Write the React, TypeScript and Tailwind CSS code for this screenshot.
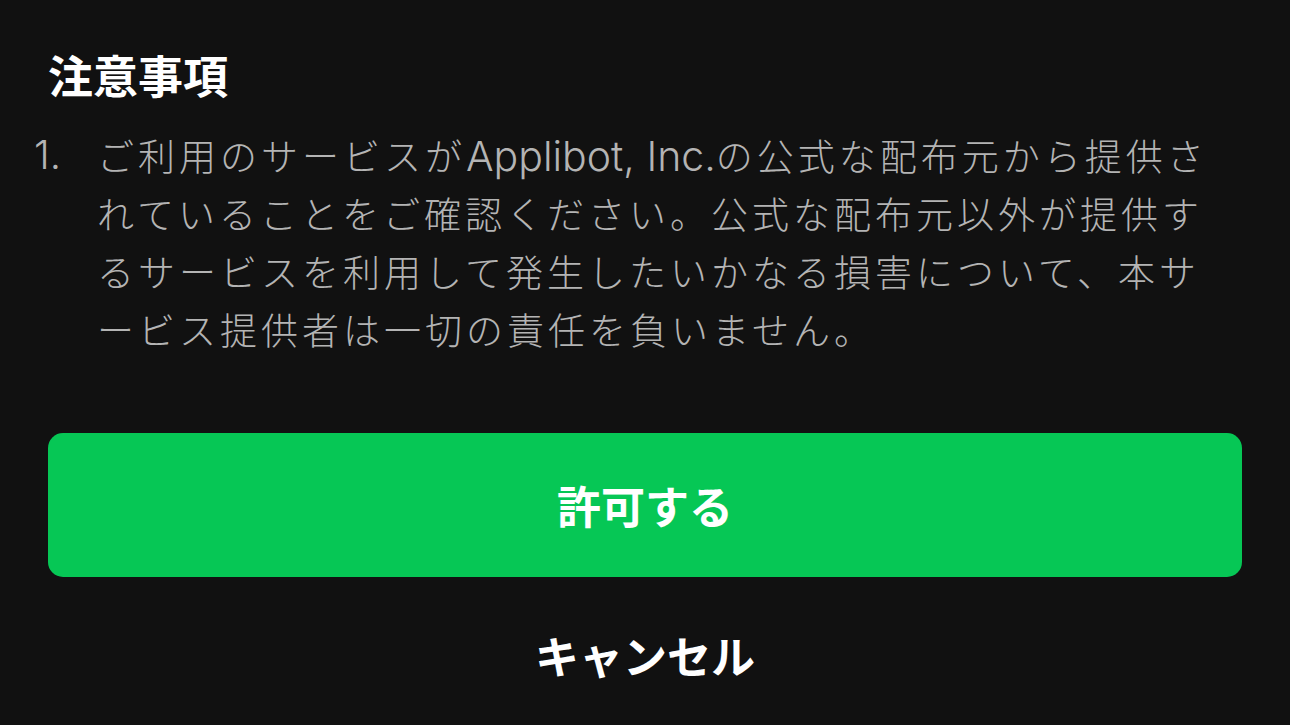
export default function App() {
  return (
    <div
      className="min-h-[725px] w-full bg-[#111111] px-[48px] pt-[46px]"
      style={{ fontFamily: '"Noto Sans CJK JP", "Noto Sans", sans-serif' }}
    >
      <h2 className="text-[45px] font-bold leading-[58px] text-white">注意事項</h2>

      <ol className="mt-[22px] -ml-[14px]">
        <li className="flex text-[37px] font-light leading-[58px] tracking-[4px] text-[#b4b4b4]">
          <span className="w-[63px] shrink-0 font-[Inter,sans-serif] text-[40px] font-light tracking-normal">1.</span>
          <span className="mr-[6px] min-w-0 flex-1">
            ご利用のサービスが
            <span className="font-[Inter,sans-serif] text-[41px] font-light leading-none tracking-normal">Applibot, Inc.</span>
            の公式な配布元から提供されていることをご確認ください。公式な配布元以外が提供するサービスを利用して発生したいかなる損害について、本サービス提供者は一切の責任を負いません。
          </span>
        </li>
      </ol>

      <button
        type="button"
        className="mt-[75px] flex h-[144px] w-full items-center justify-center rounded-[15px] bg-[#06c755] text-[44px] font-bold text-white"
      >
        許可する
      </button>

      <button
        type="button"
        className="mt-[49px] block w-full text-center text-[44px] font-bold leading-[58px] text-white"
      >
        キャンセル
      </button>
    </div>
  );
}
